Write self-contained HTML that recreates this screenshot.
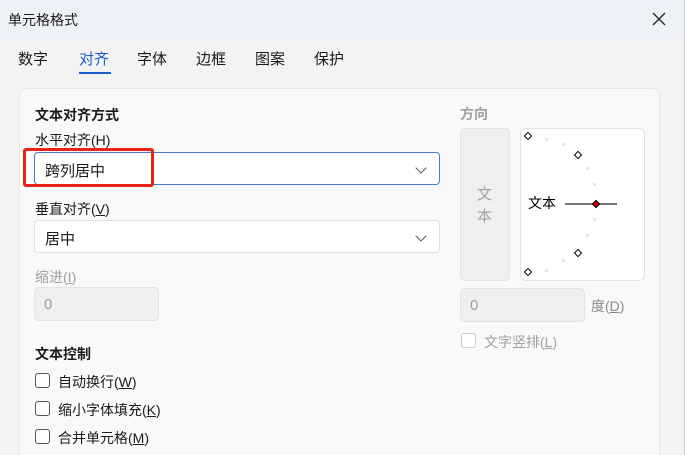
<!DOCTYPE html>
<html><head><meta charset="utf-8"><style>
*{margin:0;padding:0;box-sizing:border-box}
html,body{width:685px;height:455px;overflow:hidden}
body{background:#f3f3f3;font-family:"Liberation Sans","Noto Sans CJK SC",sans-serif;color:#1a1a1a;position:relative}
.a{position:absolute;white-space:nowrap}
.title{left:0;top:0;width:684px;height:37px;background:#eef1f6}
.sel{background:#fff;border:1px solid #e0e0e0;border-radius:4px}
.chev{position:absolute;right:14px;top:11px;width:8px;height:8px;border-right:1.5px solid #555;border-bottom:1.5px solid #555;transform:rotate(45deg)}
.cb{width:15px;height:15px;border:1px solid #555;border-radius:3px;background:#fff}
.dis{color:#a0a0a0}
.dm{position:absolute;width:6px;height:6px;border:1px solid #000;background:#fff;transform:rotate(45deg)}
.dot{position:absolute;width:3px;height:3px;background:#ece6d6}
</style></head><body>
<div class="a title"></div>
<div class="a" style="left:684px;top:0;width:1px;height:455px;background:#d0d0d0"></div>
<div class="a" style="left:8px;top:10px;font-size:14px">单元格格式</div>
<svg class="a" style="left:652px;top:12px" width="14" height="14"><path d="M1 1L13 13M13 1L1 13" stroke="#222" stroke-width="1.3"/></svg>
<div class="a" style="left:18px;top:48px;font-size:15px">数字</div>
<div class="a" style="left:79px;top:48px;font-size:15px;color:#1e5bd0">对齐</div>
<div class="a" style="left:79px;top:72px;width:32px;height:2px;background:#1e5bd0"></div>
<div class="a" style="left:137px;top:48px;font-size:15px">字体</div>
<div class="a" style="left:196px;top:48px;font-size:15px">边框</div>
<div class="a" style="left:255px;top:48px;font-size:15px">图案</div>
<div class="a" style="left:314px;top:48px;font-size:15px">保护</div>
<div class="a" style="left:19px;top:88px;width:641px;height:367px;background:#f9f9f9;border:1px solid #e6e6e6;border-bottom:none;border-radius:7px 7px 0 0"></div>
<div class="a" style="left:35px;top:105px;font-size:14px;font-weight:bold">文本对齐方式</div>
<div class="a" style="left:35px;top:130px;font-size:14px">水平对齐(H)</div>
<div class="a sel" style="left:34px;top:152px;width:406px;height:33px;border-color:#4a7bd4"><div class="a" style="left:10px;top:7px;font-size:15px">跨列居中</div><div class="chev"></div></div>
<div class="a" style="left:23px;top:148px;width:131px;height:39px;border:3px solid #e8231c;border-radius:3px"></div>
<div class="a" style="left:35px;top:199px;font-size:14px">垂直对齐(<u>V</u>)</div>
<div class="a sel" style="left:34px;top:220px;width:406px;height:33px"><div class="a" style="left:10px;top:7px;font-size:15px">居中</div><div class="chev"></div></div>
<div class="a dis" style="left:35px;top:267px;font-size:14px">缩进(<u>I</u>)</div>
<div class="a" style="left:34px;top:287px;width:125px;height:34px;background:#efefef;border:1px solid #e2e2e2;border-radius:5px"><div class="a dis" style="left:9px;top:8px;font-size:15px">0</div></div>
<div class="a" style="left:35px;top:344px;font-size:14px;font-weight:bold">文本控制</div>
<div class="a cb" style="left:35px;top:373px"></div><div class="a" style="left:58px;top:372px;font-size:14px">自动换行(<u>W</u>)</div>
<div class="a cb" style="left:35px;top:401px"></div><div class="a" style="left:58px;top:400px;font-size:14px">缩小字体填充(<u>K</u>)</div>
<div class="a cb" style="left:35px;top:429px"></div><div class="a" style="left:58px;top:428px;font-size:14px">合并单元格(<u>M</u>)</div>
<div class="a dis" style="left:460px;top:104px;font-size:14px;font-weight:bold">方向</div>
<div class="a" style="left:460px;top:128px;width:50px;height:153px;background:#efefef;border:1px solid #e2e2e2;border-radius:5px"><div class="a dis" style="left:16px;top:55px;font-size:15px;line-height:22px;white-space:normal;width:16px">文本</div></div>
<div class="a" style="left:520px;top:128px;width:125px;height:153px;background:#fff;border:1px solid #e2e2e2;border-radius:6px">
<div class="dm" style="left:4px;top:4px"></div><div class="dm" style="left:54px;top:23px"></div><div class="dm" style="left:54px;top:121px"></div><div class="dm" style="left:4px;top:140px"></div>
<div class="dot" style="left:24px;top:9px"></div><div class="dot" style="left:41px;top:14px"></div><div class="dot" style="left:65px;top:38px"></div><div class="dot" style="left:72px;top:54px"></div><div class="dot" style="left:72px;top:89px"></div><div class="dot" style="left:65px;top:105px"></div><div class="dot" style="left:41px;top:130px"></div><div class="dot" style="left:24px;top:140px"></div>
<div class="a" style="left:7px;top:64px;font-size:14px;color:#000">文本</div>
<div class="a" style="left:44px;top:74px;width:52px;height:2px;background:#777"></div>
<div class="dm" style="left:72px;top:72px;background:#c00;width:6px;height:6px"></div>
</div>
<div class="a" style="left:460px;top:288px;width:125px;height:34px;background:#efefef;border:1px solid #e2e2e2;border-radius:5px"><div class="a dis" style="left:9px;top:8px;font-size:15px">0</div></div>
<div class="a dis" style="left:591px;top:296px;font-size:14px;color:#8a8a8a">度(<u>D</u>)</div>
<div class="a cb" style="left:461px;top:333px;border-color:#ccc"></div><div class="a dis" style="left:484px;top:332px;font-size:14px">文字竖排(<u>L</u>)</div>
</body></html>
